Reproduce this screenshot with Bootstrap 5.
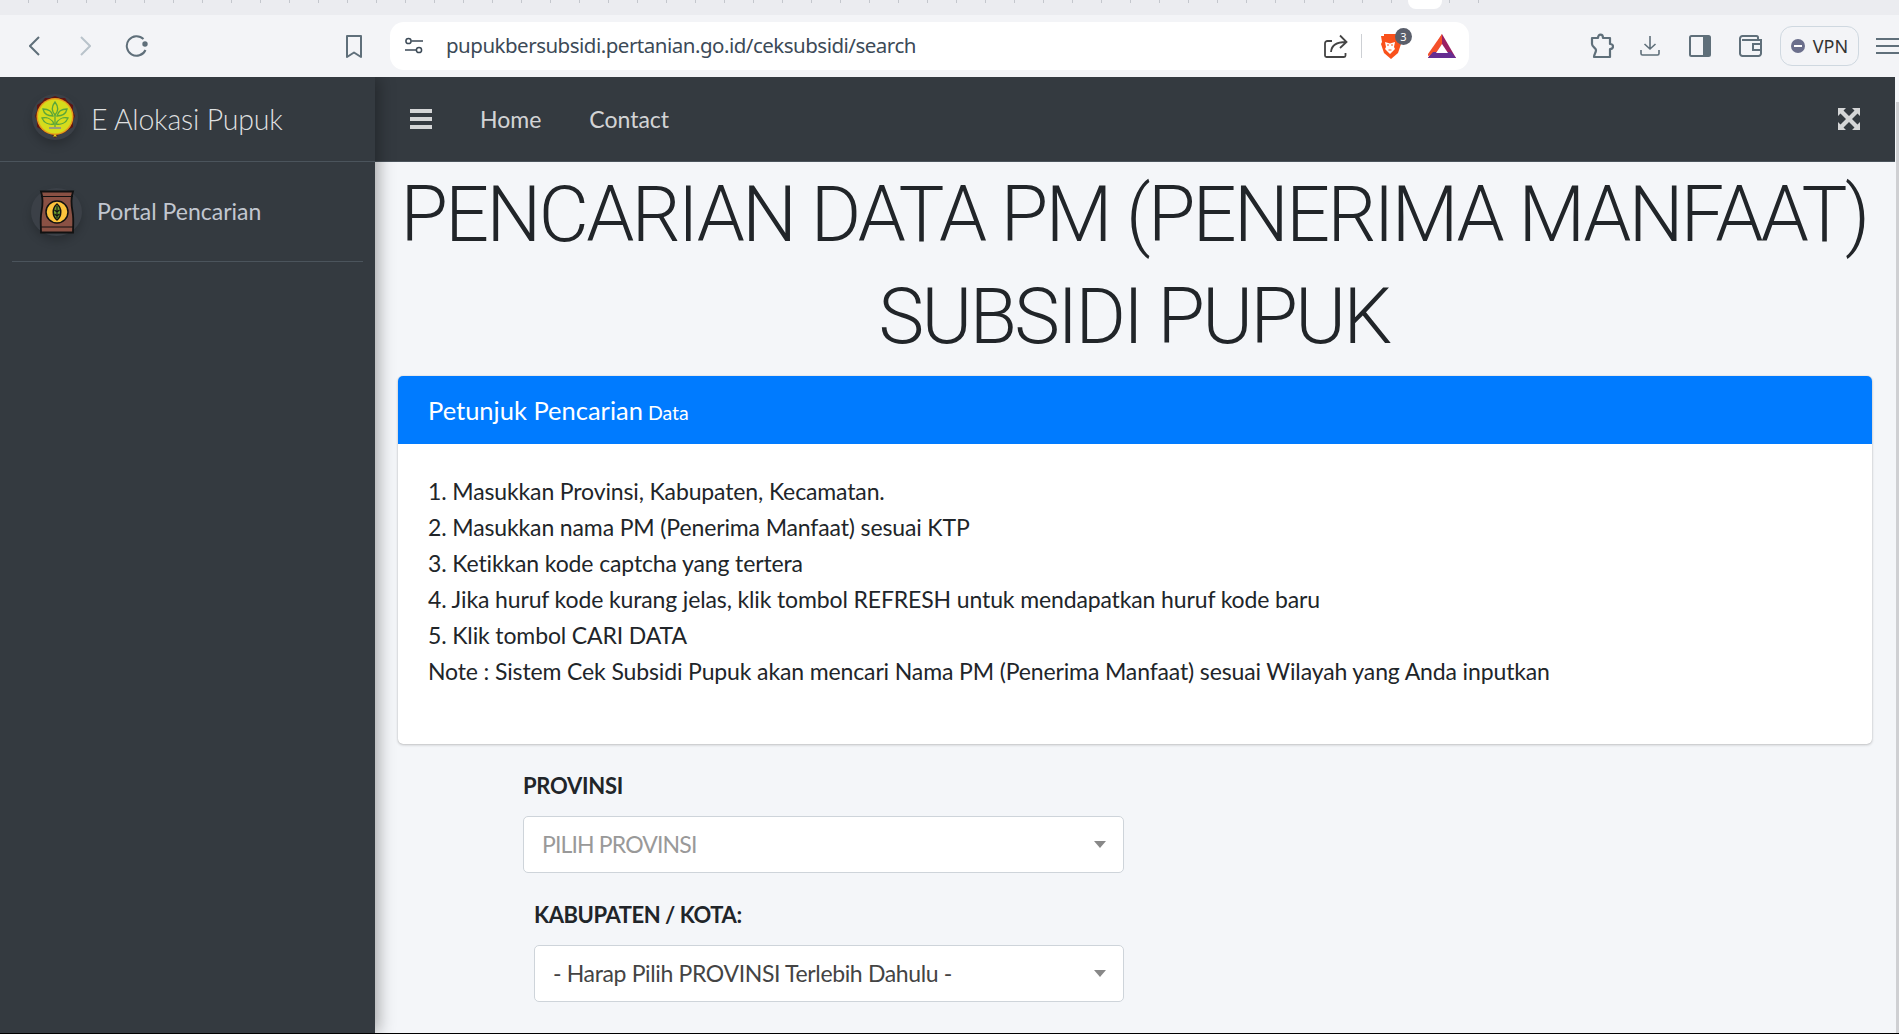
<!DOCTYPE html>
<html lang="en">
<head>
  <meta charset="UTF-8" />
  <meta name="viewport" content="width=device-width, initial-scale=1" />
  <title>E Alokasi Pupuk</title>
  <link href="https://cdn.jsdelivr.net/npm/bootstrap@5.3.0/dist/css/bootstrap.min.css" rel="stylesheet"/>
  <style>
    html,body{height:100%}
    body{font-family:"Lato","Liberation Sans",sans-serif;background:#f4f6f9;color:#212529;overflow:hidden;border-bottom:1px solid #000}
    .tab-strip{height:15px;background:#ebecf0;position:relative;flex:none}
    .tick-row{height:3px;background-image:repeating-linear-gradient(90deg,transparent 0 28px,#c4c7cd 28px 29px);width:1495px}
    .tab-stub{position:absolute;left:1408px;top:0;width:34px;height:9px;background:#fff;border-radius:0 0 8px 8px}
    .chrome-bar{height:62px;background:#f3f4f7;flex:none;padding-left:29px}
    .address-box{width:1079px;height:48px;background:#fff;border-radius:14px;margin-left:28px;padding:0 13px 0 15px;font-size:20.5px;color:#3c4a57;font-family:"Noto Sans",sans-serif;letter-spacing:-.5px}
    .address-text{margin-left:23px;padding-bottom:2px}
    .vpn-pill{width:79px;height:40px;border:1.5px solid #cfd8e0;border-radius:12px;font-size:18px;color:#333;font-family:"Noto Sans",sans-serif;flex:none}
    .vpn-dot{width:14px;height:14px;border-radius:50%;background:#6b6f8c;position:relative}
    .vpn-dot::after{content:"";position:absolute;left:3px;right:3px;top:6px;height:2px;background:#fff}
    .shield-wrap{position:relative;width:33px;height:31px;margin-top:-6px}
    .shield-wrap svg{position:absolute;left:0;bottom:0}
    .shield-count{position:absolute;left:16px;top:0;width:17px;height:17px;border-radius:50%;background:#5a5f6b;color:#fff;font-size:11px;line-height:17px;text-align:center;letter-spacing:0}
    .sep-line{width:1px;height:24px;background:#cdd0d4}

    .app-wrap{min-height:0;overflow:hidden}
    .side-panel{width:375px;flex:none;background:#343a40;color:#c2c7d0;box-shadow:3px 0 16px rgba(0,0,0,.35);position:relative;z-index:2}
    .brand-row{height:85px;border-bottom:1px solid #4b545c;padding-left:32px}
    .brand-name{font-size:28.500px;font-weight:300;color:rgba(255,255,255,.85);margin-left:13px;letter-spacing:-.2px}
    .avatar-ring{width:46px;height:46px;border-radius:50%;background:#3b4047;box-shadow:0 5px 10px rgba(0,0,0,.2);flex:none}
    .brand-row .avatar-ring{margin-bottom:4px}
    .portal-row{height:100px;margin:0 12px;border-bottom:1px solid #4b545c;padding-left:19px}
    .portal-name{font-size:23px;margin-left:15px;color:#c2c7d0}

    .main-col{min-width:0;background:#f4f6f9}
    .top-nav{height:85px;background:#343a40;border-bottom:1px solid #4b545c;padding:0 35px 0 35px;flex:none;margin-right:4px;font-size:23px}
    .top-nav a{color:rgba(255,255,255,.8);text-decoration:none;margin-left:48px}
    .burger{width:22px;height:20px;flex:none;display:block}
    .scroll-thumb{position:absolute;right:0;top:25px;bottom:0;width:3px;background:#cfd0d3}
    .page-title{font-family:"Roboto",sans-serif;font-size:77px;font-weight:300;line-height:102px;text-align:center;margin:2px 0 0;padding:0 14px 0 8px;letter-spacing:-2.550px}
    .guide-card{margin:8px 27px 0 23px;border:0;border-radius:5px;box-shadow:0 0 1px rgba(0,0,0,.25),0 1px 3px rgba(0,0,0,.2);overflow:hidden;background:#fff}
    .guide-head{height:68px;background:#007bff;color:#fff;padding:0 30px;font-size:25.500px}
    .guide-head small{font-size:19.500px;margin-left:5px}
    .guide-body{padding:29px 30px 55px;font-size:23px;line-height:36px;letter-spacing:-.13px}
    .form-zone{padding:0 0 0 148px;width:749px}
    .field-label{font-size:22px;font-weight:700;line-height:36px;margin:24px 0 12px;letter-spacing:-.25px}
    .field-label.second{margin:24px 0 12px 11px;letter-spacing:-.45px}
    .pick-box{height:57px;border:1px solid #ced4da;border-radius:5px;background:#fff;font-size:23px;padding:0 17px 0 18px}
    .pick-box.second{margin-left:11px;color:#444;letter-spacing:-.35px}
    .pick-box.empty{color:#999;letter-spacing:-.85px}
    .caret-mark{width:0;height:0;border-left:6px solid transparent;border-right:6px solid transparent;border-top:7px solid #888}
  </style>
</head>
<body class="d-flex flex-column">

  <!-- browser chrome -->
  <div class="tab-strip"><div class="tick-row"></div><div class="tab-stub"></div></div>
  <div class="chrome-bar d-flex align-items-center">
    <svg width="11" height="20" viewBox="0 0 11 20" fill="none" stroke="#5f6f7a" stroke-width="2"><path d="M10 1 1 10l9 9"/></svg>
    <svg style="margin-left:40px" width="11" height="20" viewBox="0 0 11 20" fill="none" stroke="#b9c3cb" stroke-width="2"><path d="m1 1 9 9-9 9"/></svg>
    <svg style="margin-left:34px" width="23" height="23" viewBox="0 0 23 23" fill="none" stroke="#5f6f7a" stroke-width="2"><path d="M20.500 15a9.800 9.800 0 1 1-2-11"/><circle cx="20" cy="9" r="2.700" fill="#5f6f7a" stroke="none"/></svg>
    <svg style="margin-left:198px" width="16" height="23" viewBox="0 0 16 23" fill="none" stroke="#5f6f7a" stroke-width="2"><path d="M1 1h14v21l-7-4.500L1 22z" stroke-linejoin="round"/></svg>
    <div class="address-box d-flex align-items-center">
      <svg width="18" height="18" viewBox="0 0 18 18" fill="none" stroke="#3c4a57" stroke-width="1.500"><circle cx="3.500" cy="4" r="2.600"/><path d="M6.500 4H18M0 13h11"/><circle cx="14" cy="13" r="2.600"/></svg>
      <span class="address-text flex-grow-1">pupukbersubsidi.pertanian.go.id/ceksubsidi/search</span>
      <svg width="24" height="24" viewBox="0 0 24 24" fill="none" stroke="#444" stroke-width="1.800"><path d="M8 7H3.500A2.500 2.500 0 0 0 1 9.500V21.500A1.500 1.500 0 0 0 2.500 23H20a1.500 1.500 0 0 0 1.500-1.500V19"/><path d="M7 18c.5-7 5-10 15-10M16 1.500 22.500 8 16 14"/></svg>
      <div class="sep-line" style="margin:0 17px 0 13px"></div>
      <div class="shield-wrap">
        <svg width="22" height="25" viewBox="0 0 22 25"><path d="M5 0h12l2 2 3 0-1 6 1 2-3 9-7 6-7-6-3-9 1-2-1-6 3 0z" fill="#f9511b"/><path d="M6 8l5 1.500L16 8l-1 5 1 2-5 5-5-5 1-2z" fill="#fff"/><path d="M8 11h2M12 11h2M9.500 16h3" stroke="#f9511b" stroke-width="1.200"/></svg>
        <span class="shield-count">3</span>
      </div>
      <svg style="margin-left:16px" width="28" height="24" viewBox="0 0 28 24"><path d="M14 0 0 24h28z" fill="#9a1f63"/><path d="M14 0 0 20v2l8-3 6-9z" fill="#f5502a"/><path d="M0 24h28l-5-6H5z" fill="#662d91"/><path d="M14 10 8 19h12z" fill="#fff"/></svg>
    </div>
    <svg style="margin-left:121px" width="24" height="26" viewBox="0 0 24 26" fill="none" stroke="#5f6f7a" stroke-width="2.200"><path d="M2 5h6c0-4.500 5-4.500 5 0h7v6c4 0 4 5 0 5v8H4c0-3 2-4 2-7 0-2-4-3-4-6z" stroke-linejoin="round"/></svg>
    <svg style="margin-left:26px" width="20" height="20" viewBox="0 0 20 20" fill="none" stroke="#5f6f7a" stroke-width="1.600"><path d="M10 0v13M4.500 8l5.500 5 5.500-5M1 14v3.500A1.500 1.500 0 0 0 2.500 19h15a1.500 1.500 0 0 0 1.500-1.500V14"/></svg>
    <svg style="margin-left:29px" width="22" height="22" viewBox="0 0 22 22"><rect x="1" y="1" width="20" height="20" rx="1.500" fill="none" stroke="#5f6f7a" stroke-width="2"/><rect x="14" y="1" width="7" height="20" fill="#5f6f7a"/></svg>
    <svg style="margin-left:28px" width="23" height="22" viewBox="0 0 23 22" fill="none" stroke="#5f6f7a" stroke-width="2"><path d="M19 5V2.500A1.500 1.500 0 0 0 17.500 1H3.500A2.500 2.500 0 0 0 1 3.500v15A2.500 2.500 0 0 0 3.500 21h16a2.500 2.500 0 0 0 2.500-2.500V5H3"/><rect x="14" y="9" width="8" height="6"/></svg>
    <div class="vpn-pill d-flex align-items-center justify-content-center gap-2" style="margin-left:18px"><span class="vpn-dot"></span>VPN</div>
    <svg style="margin-left:17px;flex:none" width="23" height="18" viewBox="0 0 23 18" stroke="#5f6f7a" stroke-width="1.800"><path d="M0 2h23M0 9h23M0 16h23"/></svg>
  </div>

  <div class="app-wrap d-flex flex-grow-1">
    <!-- sidebar -->
    <aside class="side-panel">
      <div class="brand-row d-flex align-items-center">
        <span class="avatar-ring d-flex align-items-center justify-content-center">
          <svg width="40" height="42" viewBox="0 0 40 42">
            <path d="M20 0l5 2 5 0 3 4 5 3 0 6 2 5-2 5 0 6-5 3-4 3-5 1-4 4-4-4-5-1-4-3-5-3 0-6-2-5 2-5 0-6 5-3 3-4 5 0z" fill="#5e1512"/>
            <path d="M20 38l-2 2.500h4z" fill="#d6dc1c"/>
            <circle cx="20" cy="20.500" r="18.500" fill="#e79a1c"/><circle cx="20" cy="20.500" r="17" fill="#d6dc1c"/>
            <path d="M20 6c3.500 4.500 3.500 9 0 13-3.500-4-3.500-8.500 0-13zM8 13c5 0 9 2.500 10 7-5 0-9-2.500-10-7zM32 13c-5 0-9 2.500-10 7 5 0 9-2.500 10-7zM7 22c5-1 10 1 12 6-5 1-10-1-12-6zM33 22c-5-1-10 1-12 6 5 1 10-1 12-6z" fill="none" stroke="#5aa63a" stroke-width="1.300"/>
            <path d="M20 19v12" stroke="#5aa63a" stroke-width="1.300"/><rect x="14" y="31" width="12" height="2" fill="#9a9a7a"/>
          </svg>
        </span>
        <span class="brand-name">E Alokasi Pupuk</span>
      </div>
      <div class="portal-row d-flex align-items-center">
        <span class="avatar-ring d-flex align-items-center justify-content-center" style="width:51px;height:48px">
          <svg width="40" height="44" viewBox="0 0 40 44">
            <path d="M4 1.500h32c-2 6-2 12-.5 20 1.500 8 .5 14 .5 21H4c0-7-1-13 .5-21C6 13.500 6 7.500 4 1.500z" fill="#8a5144" stroke="#111" stroke-width="1.800"/>
            <path d="M4 6.500h32M4 37h32" stroke="#111" stroke-width="1.200"/>
            <circle cx="20" cy="22" r="11" fill="#fcc33c" stroke="#111" stroke-width="1.500"/>
            <path d="M20 14c5 4 5 12 0 16-5-4-5-12 0-16z" fill="#6d9c2e" stroke="#111" stroke-width="1.500"/><path d="M20 16v12M17.500 20l2.500 2 2.500-2M17.500 24l2.500 2 2.500-2" stroke="#111" fill="none" stroke-width="1.100"/>
          </svg>
        </span>
        <span class="portal-name">Portal Pencarian</span>
      </div>
    </aside>

    <!-- main content -->
    <div class="main-col d-flex flex-column flex-grow-1 position-relative">
      <nav class="top-nav d-flex align-items-center">
        <svg class="burger" viewBox="0 0 22 20" fill="#d5d6d7"><rect width="22" height="4" y="0"/><rect width="22" height="4" y="8"/><rect width="22" height="4" y="16"/></svg>
        <a href="#" style="margin-left:48px">Home</a>
        <a href="#">Contact</a>
        <svg class="ms-auto" width="22" height="22" viewBox="0 0 22 22" fill="#d5d6d7"><path d="M0 0h8L5.500 2.500 11 8l5.500-5.500L14 0h8v8l-2.500-2.500L14 11l5.500 5.500L22 14v8h-8l2.500-2.500L11 14l-5.500 5.500L8 22H0v-8l2.500 2.500L8 11 2.500 5.500 0 8z"/></svg>
      </nav>
      <div class="scroll-thumb"></div>
      <h1 class="page-title">PENCARIAN DATA PM (PENERIMA MANFAAT) SUBSIDI PUPUK</h1>
      <div class="card guide-card">
        <div class="guide-head d-flex align-items-center"><span>Petunjuk Pencarian<small>Data</small></span></div>
        <div class="guide-body">
          1. Masukkan Provinsi, Kabupaten, Kecamatan.<br>
          2. Masukkan nama PM (Penerima Manfaat) sesuai KTP<br>
          3. Ketikkan kode captcha yang tertera<br>
          4. Jika huruf kode kurang jelas, klik tombol REFRESH untuk mendapatkan huruf kode baru<br>
          5. Klik tombol CARI DATA<br>
          Note : Sistem Cek Subsidi Pupuk akan mencari Nama PM (Penerima Manfaat) sesuai Wilayah yang Anda inputkan
        </div>
      </div>
      <div class="form-zone">
        <div class="field-label">PROVINSI</div>
        <div class="pick-box empty d-flex align-items-center justify-content-between"><span>PILIH PROVINSI</span><span class="caret-mark"></span></div>
        <div class="field-label second">KABUPATEN / KOTA:</div>
        <div class="pick-box second d-flex align-items-center justify-content-between"><span>- Harap Pilih PROVINSI Terlebih Dahulu -</span><span class="caret-mark"></span></div>
      </div>
    </div>
  </div>

  <script src="https://cdn.jsdelivr.net/npm/bootstrap@5.3.0/dist/js/bootstrap.bundle.min.js"></script>
</body>
</html>
